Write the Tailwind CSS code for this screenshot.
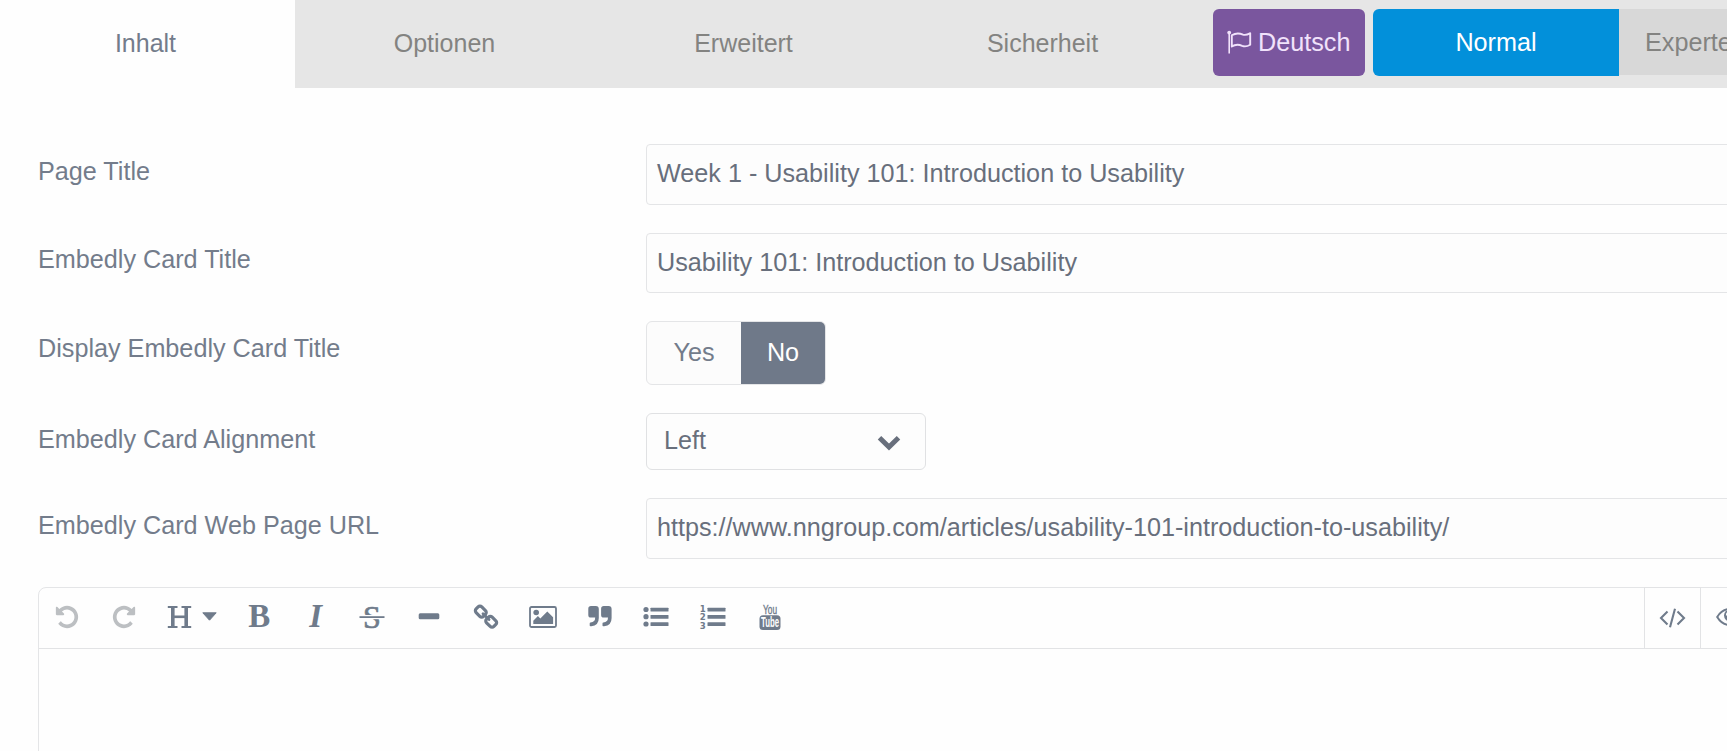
<!DOCTYPE html>
<html lang="de">
<head>
<meta charset="utf-8">
<title>Page editor</title>
<script src="https://cdn.jsdelivr.net/npm/@tailwindcss/browser@4"></script>
</head>
<body class="h-[751px] overflow-hidden bg-[#fefefe] font-['Liberation_Sans',Arial,sans-serif] text-[25.2px] leading-[30px] text-[#737c8b]">
<div class="flex h-[751px] w-full flex-col overflow-hidden">
  <nav class="flex h-[88px] w-[1860px] shrink-0 bg-[#e6e6e6] text-[25px] text-[#838381]">
    <div class="flex w-[295px] items-center justify-center bg-[#fefefe] pr-1 pb-[2px] text-[#737c8b]">Inhalt</div>
    <div class="flex w-[299px] items-center justify-center pb-[2px]">Optionen</div>
    <div class="flex w-[299px] items-center justify-center pb-[2px]">Erweitert</div>
    <div class="flex w-[299px] items-center justify-center pb-[2px]">Sicherheit</div>
    <div class="ml-[21px] mt-[9px] flex h-[67px] w-[152px] items-center rounded-md bg-[#7a569e] pl-[14px] pb-[2px] text-[25.2px] text-[#f1e2fb]">
      <svg class="mr-[6px] h-[24px] w-[25px] shrink-0" viewBox="0 0 25 24" fill="none" stroke="currentColor" stroke-width="1.9"><circle cx="2.2" cy="2.600" r="1.9" fill="currentColor" stroke="none"/><path d="M2.2 3v20.500" stroke-width="1.6"/><path d="M4.800 5.200C9.500 2.400 13 3.300 16 4.600c3 1 5-.2 7.200-1.400v11.500c-3 1.800-5 2.300-8 1.100-4-1.800-7-1.500-10.400.6z" stroke-linejoin="round"/></svg>
      <span>Deutsch</span>
    </div>
    <div class="ml-2 mt-[9px] flex h-[67px] w-[246px] items-center justify-center rounded-l-md bg-[#0290da] pb-[2px] text-[25.2px] text-white">Normal</div>
    <div class="mt-[9px] flex h-[66px] w-[200px] items-center bg-[#d8d8d8] pl-[26px] pb-px text-[25.2px]">Experte</div>
  </nav>

  <main class="flex w-[1860px] flex-col pl-[38px] pt-[56px]">
    <div class="flex h-[61px] items-start">
      <label class="w-[608px] pt-3">Page Title</label>
      <div class="flex h-[61px] w-[1200px] items-center rounded border border-[#e4e5e7] bg-[#fdfdfd] pl-[10px] pb-[4px] text-[#686f7c]">Week 1 - Usability 101: Introduction to Usability</div>
    </div>
    <div class="mt-7 flex h-[60px] items-start">
      <label class="w-[608px] pt-[11px]">Embedly Card Title</label>
      <div class="flex h-[60px] w-[1200px] items-center rounded border border-[#e4e5e7] bg-[#fdfdfd] pl-[10px] pb-[3px] text-[#686f7c]">Usability 101: Introduction to Usability</div>
    </div>
    <div class="mt-7 flex h-[64px] items-start">
      <label class="w-[608px] pt-3">Display Embedly Card Title</label>
      <div class="flex h-[64px] w-[180px] overflow-hidden rounded-md border border-[#e4e5e7] bg-[#fcfcfc]">
        <div class="flex w-[94px] shrink-0 items-center justify-center pb-[2px]">Yes</div>
        <div class="flex w-[85px] items-center justify-center bg-[#6f7989] pb-[2px] text-white">No</div>
      </div>
    </div>
    <div class="mt-7 flex h-[57px] items-start">
      <label class="w-[608px] pt-[11px]">Embedly Card Alignment</label>
      <div class="flex h-[57px] w-[280px] items-center justify-between rounded-md border border-[#e0e1e3] bg-[#fdfdfd] pl-[17px] pr-[24px] pb-[4px] text-[#686f7c]">
        <span>Left</span>
        <svg class="mt-[6px] h-[16px] w-[24px]" viewBox="0 0 24 16" fill="none" stroke="currentColor" stroke-width="5"><path d="M2.500 2.800L12 12l9.500-9.200"/></svg>
      </div>
    </div>
    <div class="mt-7 flex h-[61px] items-start">
      <label class="w-[608px] pt-3">Embedly Card Web Page URL</label>
      <div class="flex h-[61px] w-[1200px] items-center rounded border border-[#e4e5e7] bg-[#fdfdfd] pl-[10px] pb-[3px] text-[#686f7c]">https://www.nngroup.com/articles/usability-101-introduction-to-usability/</div>
    </div>

    <section class="mt-7 h-[180px] w-[1800px] rounded-lg border border-[#e4e5e7]">
      <div class="flex h-[61px] items-center border-b border-[#e2e3e5] pb-[3px] text-[#6f7b8b]">
        <div class="flex w-[56.8px] shrink-0 justify-center text-[#bcbfc2]"><svg class="h-[26px] w-[26px]" viewBox="0 0 1792 1792" fill="currentColor"><path d="M1664 896q0 156-61 298t-164 245-245 164-298 61q-172 0-327-72.500t-264-204.500q-7-10-6.500-22.500t8.500-20.500l137-138q10-9 25-9 16 2 23 12 73 95 179 147t225 52q104 0 198.500-40.500t163.500-109.500 109.500-163.500 40.500-198.500-40.500-198.500-109.500-163.500-163.500-109.500-198.500-40.500q-98 0-188 35.500t-160 101.500l137 138q31 30 14 69-17 40-59 40h-448q-26 0-45-19t-19-45v-448q0-42 40-59 39-17 69 14l130 129q107-101 244.500-156.500t284.500-55.500q156 0 298 61t245 164 164 245 61 298z"/></svg></div>
        <div class="flex w-[56.8px] shrink-0 justify-center text-[#bcbfc2]"><svg class="h-[26px] w-[26px] -scale-x-100" viewBox="0 0 1792 1792" fill="currentColor"><path d="M1664 896q0 156-61 298t-164 245-245 164-298 61q-172 0-327-72.500t-264-204.500q-7-10-6.500-22.500t8.500-20.500l137-138q10-9 25-9 16 2 23 12 73 95 179 147t225 52q104 0 198.500-40.500t163.500-109.500 109.500-163.500 40.500-198.500-40.500-198.500-109.500-163.500-163.500-109.500-198.500-40.500q-98 0-188 35.500t-160 101.500l137 138q31 30 14 69-17 40-59 40h-448q-26 0-45-19t-19-45v-448q0-42 40-59 39-17 69 14l130 129q107-101 244.500-156.500t284.500-55.500q156 0 298 61t245 164 164 245 61 298z"/></svg></div>
        <div class="flex w-[78.800px] shrink-0 items-center justify-center gap-[10px] pl-px"><svg class="h-[22px] w-[25px]" viewBox="0 0 25 22" fill="none" stroke="currentColor"><path d="M5.800 1v20M19.200 1v20" stroke-width="3.600"/><path d="M.8 1.100h9.700M14.500 1.100h9.700M.8 20.900h9.700M14.500 20.900h9.700" stroke-width="2"/><path d="M6 10.800h13" stroke-width="2.600"/></svg><svg class="h-[9px] w-[15px]" viewBox="0 0 15 9" fill="currentColor" stroke="currentColor" stroke-width="1" stroke-linejoin="round"><path d="M.8.800h13.400L7.500 8.200z"/></svg></div>
        <div class="flex w-[55.800px] shrink-0 justify-center font-['Liberation_Serif',serif] text-[33px] font-bold leading-[33px]">B</div>
        <div class="flex w-[56.800px] shrink-0 justify-center font-['Liberation_Serif',serif] text-[33px] font-bold italic leading-[33px]">I</div>
        <div class="flex w-[56.8px] shrink-0 justify-center"><svg class="h-[26px] w-[26px] overflow-visible" viewBox="0 0 26 26" fill="currentColor"><text x="13" y="23.600" text-anchor="middle" font-family="Liberation Serif" font-size="32" stroke="currentColor" stroke-width=".7">S</text><path fill="#fefefe" d="M0 11h26v4.200H0z"/><path d="M.5 12.200h25V14H.5z"/></svg></div>
        <div class="flex w-[56.8px] shrink-0 justify-center"><svg class="h-[26px] w-[22px]" viewBox="0 0 22 26" fill="currentColor"><rect x=".7" y="9.300" width="20.600" height="6" rx="1.500"/></svg></div>
        <div class="flex w-[56.8px] shrink-0 justify-center"><svg class="h-[26px] w-[26px]" viewBox="0 0 26 26" fill="none" stroke="currentColor" stroke-width="3.200" stroke-linejoin="round"><rect x="-5.200" y="-4" width="10.400" height="8" rx="2.600" transform="translate(7.800 7.600) rotate(45)"/><rect x="-5.200" y="-4" width="10.400" height="8" rx="2.600" transform="translate(18.200 17.800) rotate(45)"/><path d="M10 9.800l6 5.800" stroke-width="2.800" stroke-linecap="round"/></svg></div>
        <div class="flex w-[56.8px] shrink-0 justify-center"><svg class="h-[26px] w-[28px]" viewBox="0 0 28 26" fill="currentColor"><rect x="1" y="3" width="26" height="20" rx="1.500" fill="none" stroke="currentColor" stroke-width="1.800"/><circle cx="7.200" cy="8.500" r="2.800"/><path d="M4.300 20v-3.300l4.600-4.600 2.400 2.300 7-7 5.800 5.800V20z"/></svg></div>
        <div class="flex w-[56.8px] shrink-0 justify-center"><svg class="h-[26px] w-[24px]" viewBox="0 0 24 26" fill="currentColor"><path id="q" d="M3 2h4.800q3 0 3 3v9q0 7.700-7.500 8.200H2.500q-.8 0-.8-.8v-2q0-.8.800-.8 4.700-.4 4.700-5H3q-2.700 0-2.700-2.700V4.700Q.3 2 3 2z"/><use href="#q" x="12.800"/></svg></div>
        <div class="flex w-[56.8px] shrink-0 justify-center"><svg class="h-[26px] w-[26px]" viewBox="0 0 26 26" fill="currentColor"><circle cx="3" cy="5.500" r="2.600"/><circle cx="3" cy="12.700" r="2.600"/><circle cx="3" cy="20" r="2.600"/><rect x="7.500" y="3.700" width="18" height="3.800" rx=".6"/><rect x="7.500" y="11" width="18" height="3.800" rx=".6"/><rect x="7.500" y="18.200" width="18" height="3.800" rx=".6"/></svg></div>
        <div class="flex w-[56.8px] shrink-0 justify-center"><svg class="h-[28px] w-[26px] overflow-visible" viewBox="0 0 26 28" fill="currentColor"><g font-family="DejaVu Sans" font-weight="bold" font-size="9.500"><text x="-.2" y="8.600" textLength="6" lengthAdjust="spacingAndGlyphs">1</text><text x="-.2" y="17.400" textLength="6" lengthAdjust="spacingAndGlyphs">2</text><text x="-.2" y="26.200" textLength="6" lengthAdjust="spacingAndGlyphs">3</text></g><rect x="7.500" y="4.700" width="18" height="3.800" rx=".6"/><rect x="7.500" y="12" width="18" height="3.800" rx=".6"/><rect x="7.500" y="19.200" width="18" height="3.800" rx=".6"/></svg></div>
        <div class="flex w-[56.8px] shrink-0 justify-center"><svg class="h-[28px] w-[22px] overflow-visible" viewBox="0 0 22 28" fill="currentColor" font-family="Liberation Sans Narrow, Liberation Sans"><text x="4" y="10.800" font-size="13.500" textLength="14" lengthAdjust="spacingAndGlyphs" stroke="currentColor" stroke-width=".4">You</text><rect x=".5" y="12.200" width="21" height="14.800" rx="3.500"/><text x="2" y="24.300" font-size="14" font-weight="bold" fill="#fefefe" textLength="18" lengthAdjust="spacingAndGlyphs">Tube</text></svg></div>
        <div class="-mb-[3px] -mt-px ml-[846px] flex h-[62px] w-[57px] shrink-0 items-center justify-center border-x border-t border-[#e2e3e5] pb-px"><svg class="h-[22px] w-[27px]" viewBox="0 0 27 22" fill="none" stroke="currentColor" stroke-width="2.100"><path d="M8.500 4.500L2 11l6.500 6.500M18.500 4.500L25 11l-6.500 6.500M16 1.700L11 20.300"/></svg></div>
        <div class="flex w-[57px] shrink-0 justify-center"><svg class="h-[20px] w-[28px]" viewBox="0 0 28 20" fill="none" stroke="currentColor" stroke-width="2"><path d="M1.200 10Q6 2 14 2t12.800 8Q22 18 14 18T1.200 10z"/><circle cx="14" cy="8.500" r="6" fill="currentColor" stroke="none"/><path d="M10.500 8.500Q10.500 5 14 5" stroke="#fefefe" stroke-width="1.300"/></svg></div>
      </div>
    </section>
  </main>
</div>
</body>
</html>
